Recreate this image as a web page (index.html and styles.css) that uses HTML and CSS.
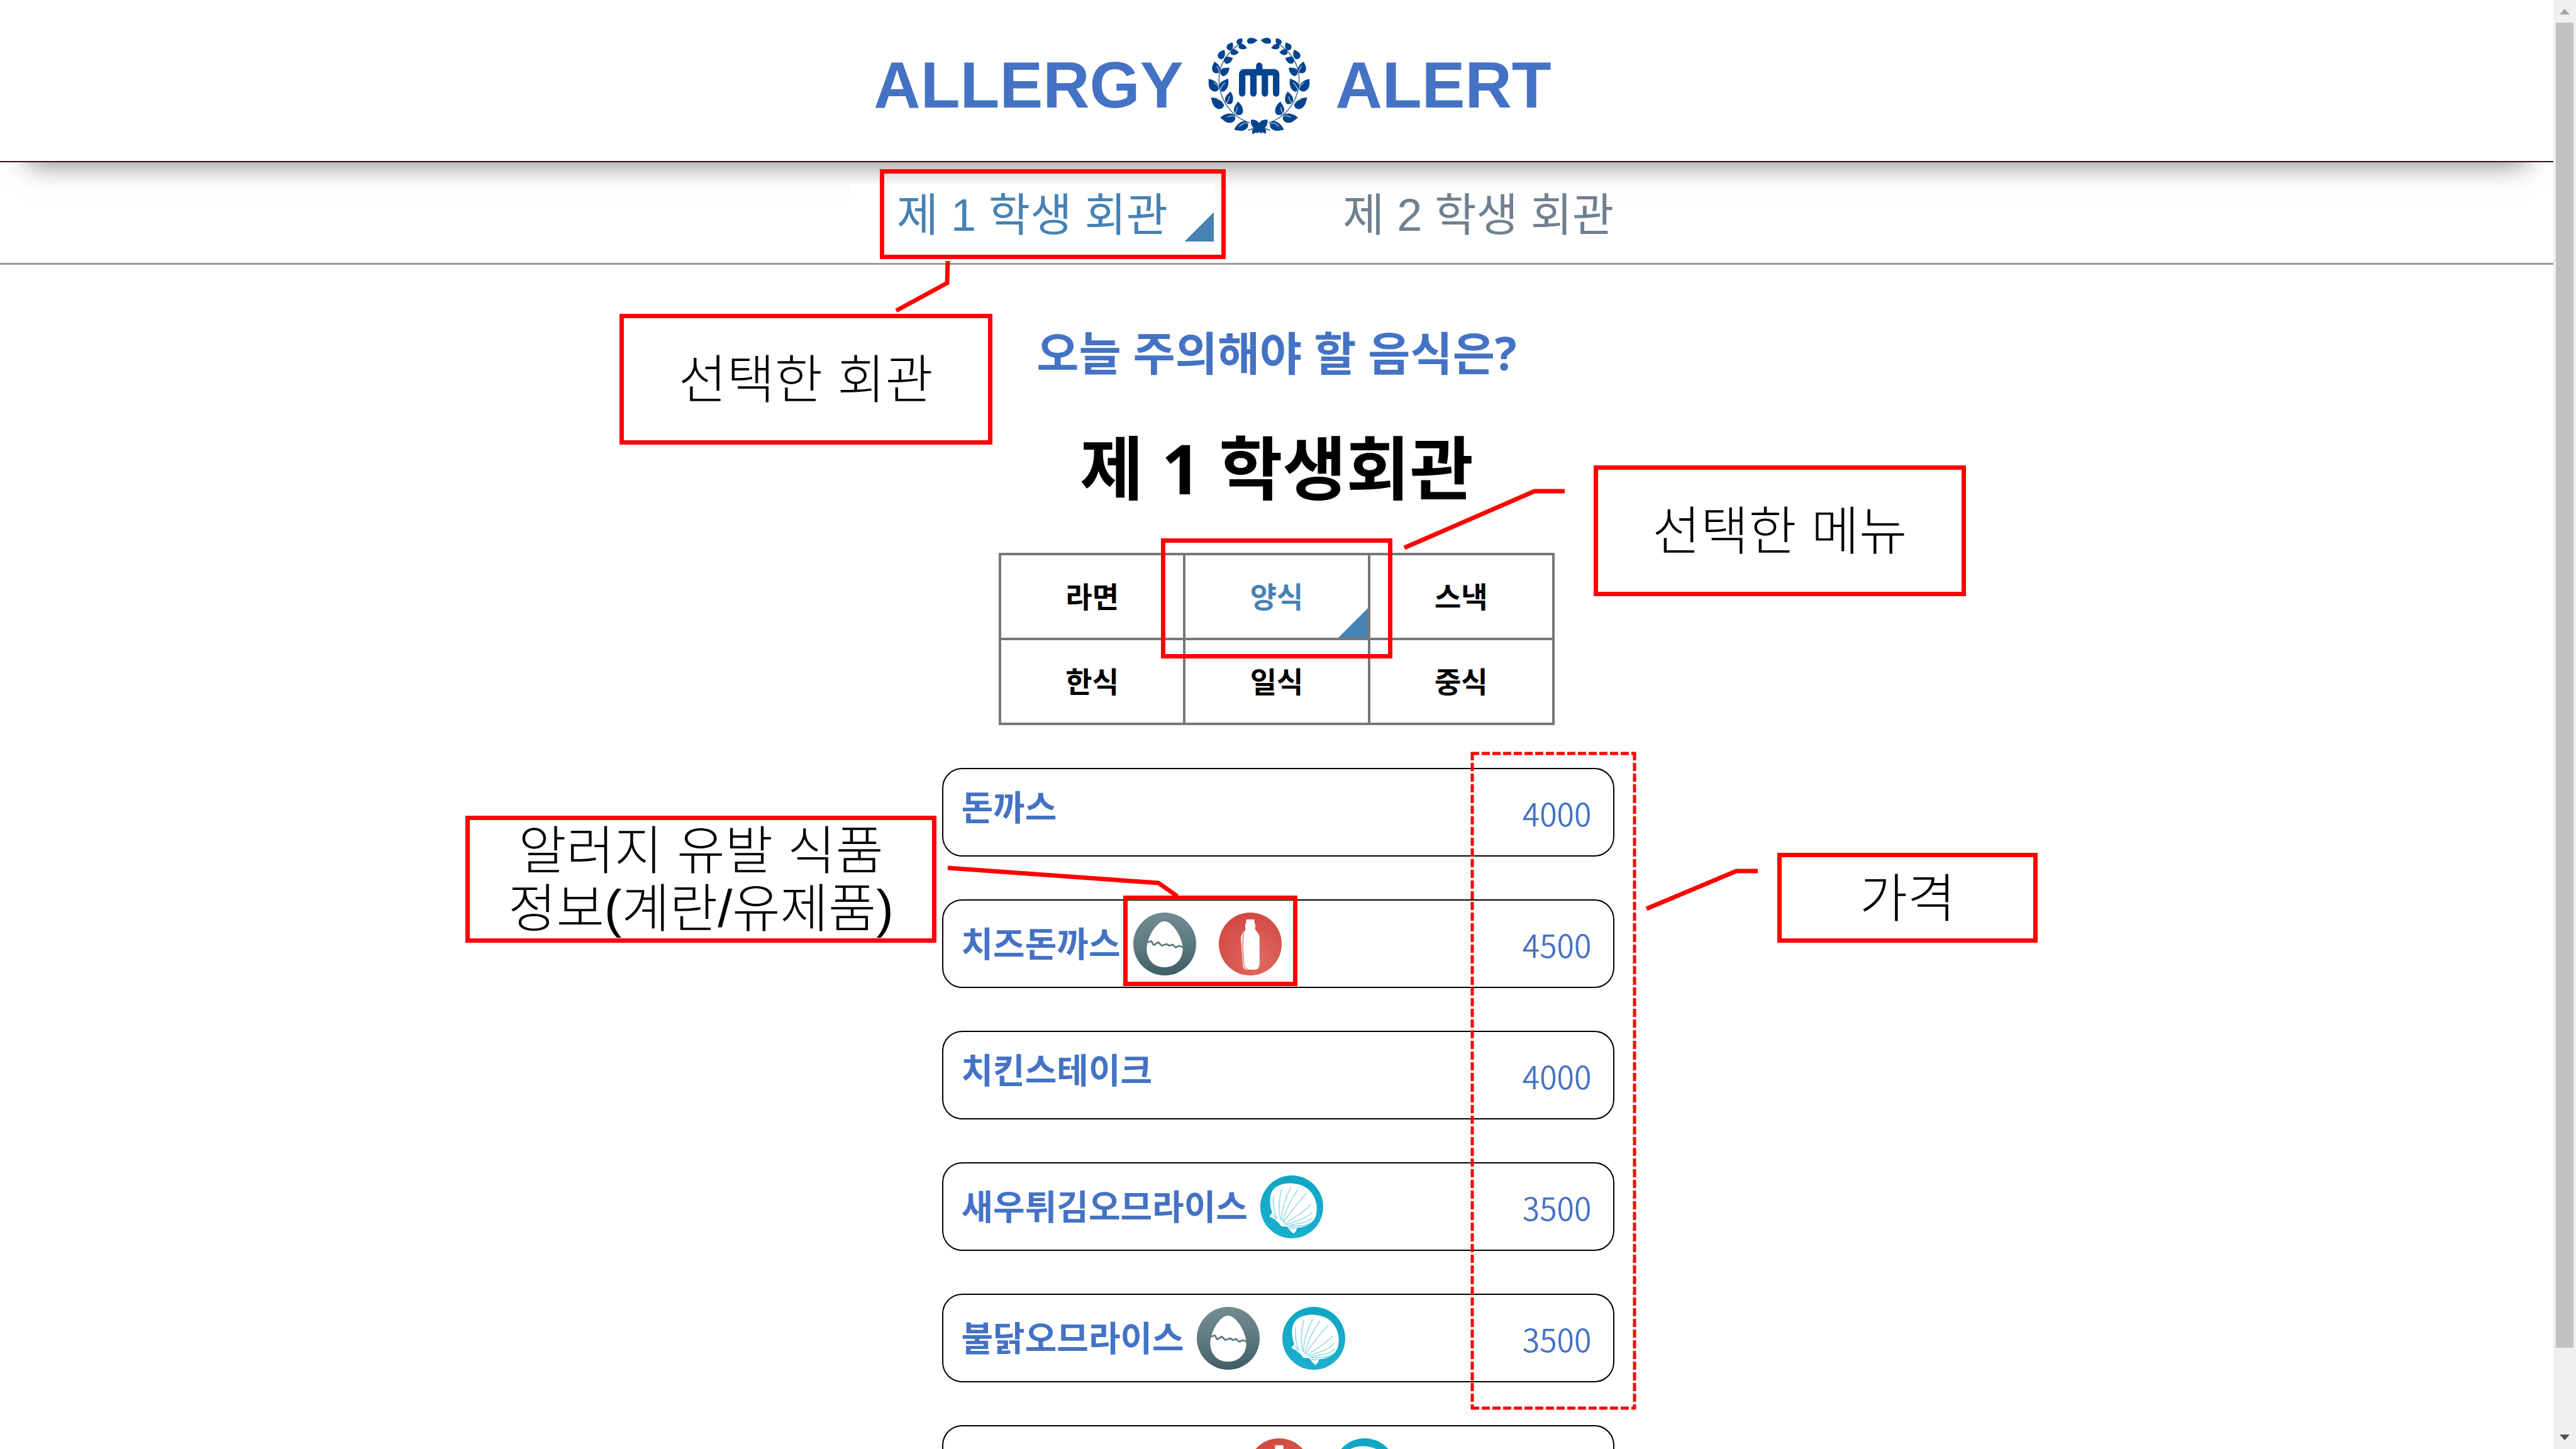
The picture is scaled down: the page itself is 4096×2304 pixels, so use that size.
FILE: index.html
```html
<!DOCTYPE html>
<html lang="ko">
<head>
<meta charset="utf-8">
<title>ALLERGY ALERT</title>
<link rel="stylesheet" href="styles.css">
</head>
<body>
<svg class="defs" aria-hidden="true">
  <defs>
    <linearGradient id="egg-fill" x1="0.4" y1="0" x2="0.5" y2="1">
      <stop offset="0" stop-color="#728b91"/>
      <stop offset="0.5" stop-color="#5f7a81"/>
      <stop offset="1" stop-color="#3e5e66"/>
    </linearGradient>
    <radialGradient id="milk-fill" cx="0.6" cy="0.75" r="0.75">
      <stop offset="0" stop-color="#de6a62"/>
      <stop offset="1" stop-color="#d24a42"/>
    </radialGradient>
    <linearGradient id="shell-fill" x1="0" y1="0" x2="0" y2="1">
      <stop offset="0" stop-color="#0fa6c5"/>
      <stop offset="1" stop-color="#1bb0cc"/>
    </linearGradient>
    <symbol id="egg" viewBox="0 0 108 108">
      <circle cx="54" cy="54" r="54" fill="url(#egg-fill)"/>
      <path fill="#fff" d="M53.500 15C67 15 84 41 85 62C85 81 72 94 53.500 94C35 94 23 81 23 62C24 41 40 15 53.500 15Z"/>
      <path fill="none" stroke="#5f7a81" stroke-width="3" stroke-linejoin="round" d="M24 51L31 49L35 56L43 51L49 57L57 54L62 57L67 55L73 60L79 57L86 60"/>
    </symbol>
    <symbol id="milk" viewBox="0 0 108 108">
      <circle cx="54" cy="54" r="54" fill="url(#milk-fill)"/>
      <path fill="#fff" d="M47 12H61V17L63 21L62 28C64 33 70 35 70 44V86C70 94 67 98 62 98H48C44 98 41 94 41 89L38 44C38 36 45 33 46 28L45 21L47 17Z"/>
      <path fill="none" stroke="#e58d87" stroke-width="2" d="M43 36C39 52 42 74 43 90Q44 95 49 97"/>
    </symbol>
    <symbol id="shell" viewBox="0 0 106 106">
      <circle cx="53" cy="53" r="53" fill="url(#shell-fill)"/>
      <path fill="#fff" d="M24 74L15 69L20 63C14 45 15 28 26 20C38 11 61 11 76 20C91 30 98 47 94 66C91 80 76 88 62 88L60 94L56 98L52 95L45 86H36L31 80Z"/>
      <path fill="none" stroke="#9bdbe8" stroke-width="1.800" stroke-linecap="round" d="M28 73C23 60 21 48 22 35M34 74C30 55 32 38 36 23M36 76C35 58 43 36 51 21M38 78C42 60 52 40 63 24M39 80C48 64 62 48 77 31M41 82C54 72 72 64 85 49M44 83C58 77 76 74 87 62M47 85C62 80 78 81 88 72M50 86C62 85 76 86 84 80M22 66L26 73M49 88Q54 91 59 88"/>
    </symbol>
    <path id="leaf" d="M0 0C28-38 72-48 94-26C108-4 98 40 62 40C36 40 20 16 0 0Z"/>
    <g id="wreath-half">
      <path fill="none" stroke="#4a7193" stroke-width="5" d="M262 104C215 135 165 185 155 265C147 350 180 410 215 450C245 484 275 500 312 512"/>
      <g fill="#04448f">
        <use href="#leaf" transform="translate(352 85) rotate(173) scale(.54 .4)"/>
        <use href="#leaf" transform="translate(272 76) rotate(124) scale(.38)"/>
        <use href="#leaf" transform="translate(298 126) rotate(194) scale(.44 .36)"/>
        <use href="#leaf" transform="translate(222 97) rotate(117) scale(.44 .42)"/>
        <use href="#leaf" transform="translate(256 148) rotate(180) scale(.42 .4)"/>
        <use href="#leaf" transform="translate(180 135) rotate(116) scale(.52 .46)"/>
        <use href="#leaf" transform="translate(225 178) rotate(158) scale(.48 .46)"/>
        <use href="#leaf" transform="translate(130 196) rotate(76) scale(.62 .54)"/>
        <use href="#leaf" transform="translate(207 227) rotate(140) scale(.56 .48)"/>
        <use href="#leaf" transform="translate(100 285) rotate(54) scale(.76 .6)"/>
        <use href="#leaf" transform="translate(200 283) rotate(120) scale(.74 .56)"/>
        <use href="#leaf" transform="translate(112 382) rotate(40) scale(.8 .6)"/>
        <use href="#leaf" transform="translate(212 350) rotate(98) scale(.66 .54)"/>
        <use href="#leaf" transform="translate(160 485) rotate(2) scale(.78 .62)"/>
        <use href="#leaf" transform="translate(250 402) rotate(84) scale(.7 .6)"/>
        <use href="#leaf" transform="translate(232 548) rotate(-25) scale(.78 .58)"/>
      </g>
      <g fill="none" stroke="#b9cbe0" stroke-width="4">
        <path d="M128 305Q150 315 153 335M185 305Q165 320 160 345M145 390Q170 395 178 415M208 375Q203 400 190 410M195 482Q225 470 235 480M248 430Q245 455 235 465M258 532Q275 510 300 512M140 220Q152 230 155 250"/>
      </g>
    </g>
  </defs>
</svg>

<div class="viewport">
  <main class="page">
    <header class="masthead">
      <h1 class="brand">
        <span>ALLERGY</span>
        <svg class="brand-logo" viewBox="98 70 524 502" role="img" aria-label="logo">
          <use href="#wreath-half"/>
          <use href="#wreath-half" transform="translate(720 0) scale(-1 1)"/>
          <path fill="#04448f" d="M318 496Q345 492 360 512Q375 492 404 496Q406 522 390 536Q402 552 392 568L376 560L370 566L360 558L350 566L344 560L328 570Q318 552 332 538Q314 522 318 496Z"/>
          <path fill="none" stroke="#4a7193" stroke-width="6" d="M332 540L304 550M388 540L416 550"/>
          <path fill="none" stroke="#04448f" stroke-width="33" stroke-linecap="round" stroke-linejoin="round" d="M273 360V262Q273 251 284 251H437Q448 251 448 262V360M331 252V360M390 252V360M361 218V250"/>
        </svg>
        <span>ALERT</span>
      </h1>
    </header>

    <nav class="halls">
      <a class="hall hall-active" href="#hall-1">제 1 학생 회관</a>
      <a class="hall" href="#hall-2">제 2 학생 회관</a>
    </nav>

    <section class="content">
      <p class="question">오늘 주의해야 할 음식은?</p>
      <h2 class="hall-title">제 1 학생회관</h2>

      <table class="kinds">
        <tr>
          <td><button class="kind" type="button">라면</button></td>
          <td><button class="kind kind-active" type="button">양식</button></td>
          <td><button class="kind" type="button">스낵</button></td>
        </tr>
        <tr>
          <td><button class="kind" type="button">한식</button></td>
          <td><button class="kind" type="button">일식</button></td>
          <td><button class="kind" type="button">중식</button></td>
        </tr>
      </table>

      <ul class="menu">
        <li class="dish dish-plain">
          <span class="dish-name">돈까스</span>
          <span class="price">4000</span>
        </li>
        <li class="dish">
          <span class="dish-name">치즈돈까스</span>
          <span class="allergens">
            <svg class="allergen"><use href="#egg"/></svg>
            <svg class="allergen"><use href="#milk"/></svg>
          </span>
          <span class="price">4500</span>
        </li>
        <li class="dish dish-plain">
          <span class="dish-name">치킨스테이크</span>
          <span class="price">4000</span>
        </li>
        <li class="dish">
          <span class="dish-name">새우튀김오므라이스</span>
          <span class="allergens">
            <svg class="allergen"><use href="#shell"/></svg>
          </span>
          <span class="price">3500</span>
        </li>
        <li class="dish">
          <span class="dish-name">불닭오므라이스</span>
          <span class="allergens">
            <svg class="allergen"><use href="#egg"/></svg>
            <svg class="allergen"><use href="#shell"/></svg>
          </span>
          <span class="price">3500</span>
        </li>
        <li class="dish">
          <span class="dish-name dish-name-blank"></span>
          <span class="allergens">
            <svg class="allergen"><use href="#milk"/></svg>
            <svg class="allergen"><use href="#shell"/></svg>
          </span>
        </li>
      </ul>
    </section>

    <div class="notes">
      <svg class="note-lines" viewBox="0 0 4060 2304" fill="none" stroke="#f00" stroke-width="7">
        <path d="M1507 415L1506 450L1425 494"/>
        <path d="M2233 871L2440 781H2488"/>
        <path d="M2618 1445L2761 1385H2795"/>
        <path d="M1507 1380L1842 1404L1872 1425"/>
        <path stroke-width="5" stroke-dasharray="13 4" d="M2339 1198H2601M2341 1196V2241M2599 1196V2241M2339 2239H2601"/>
      </svg>
      <div class="frame frame-hall"></div>
      <div class="frame frame-kind"></div>
      <div class="frame frame-allergens"></div>
      <div class="frame note note-hall">선택한 회관</div>
      <div class="frame note note-kind">선택한 메뉴</div>
      <div class="frame note note-allergens">알러지 유발 식품<br>정보(계란/유제품)</div>
      <div class="frame note note-price">가격</div>
    </div>
  </main>

  <div class="scrollbar" aria-hidden="true">
    <svg class="scroll-arrow" viewBox="0 0 16 9"><path fill="#a3a3a3" d="M8 0L16 9H0Z"/></svg>
    <div class="scroll-track"><div class="scroll-thumb"></div></div>
    <svg class="scroll-arrow" viewBox="0 0 16 9"><path fill="#505050" d="M0 0H16L8 9Z"/></svg>
  </div>
</div>
</body>
</html>
```
FILE: styles.css
```css
* {
  box-sizing: border-box;
}

body {
  margin: 0;
  background: #fff;
  color: #000;
  font-family: "Liberation Sans", "Noto Sans CJK KR", sans-serif;
}

.defs {
  position: absolute;
  width: 0;
  height: 0;
}

.viewport {
  display: flex;
  height: 100vh;
  overflow: hidden;
}

.page {
  position: relative;
  flex: 1;
  min-width: 0;
  overflow: hidden;
}

/* Header */
.masthead {
  display: flex;
  justify-content: center;
  align-items: center;
  height: 258px;
  padding-right: 204px;
  padding-top: 16px;
  border-bottom: 2px solid #2b1712;
  box-shadow: 0 43px 43px -43px #707070;
}

.brand {
  display: flex;
  align-items: center;
  gap: 40px;
  margin: 0;
  color: #4472c4;
  font-size: 103px;
  line-height: 120px;
}

.brand-logo {
  width: 162px;
  height: 155px;
}

/* Hall tabs */
.halls {
  display: flex;
  justify-content: center;
  gap: 132px;
  padding: 34px 68px 34px 0;
  border-bottom: 3px solid #9a9a9a;
}

.hall {
  padding: 8px 73px 0;
  color: #708090;
  font-size: 72px;
  font-weight: 400;
  line-height: 84px;
  text-decoration: none;
}

.hall-active {
  background: linear-gradient(135deg, transparent 50%, #4682b4 50%) right bottom / 47px 47px no-repeat #fff;
  color: #4682b4;
}

/* Content */
.content {
  display: flex;
  flex-direction: column;
  align-items: center;
  padding-top: 90px;
  font-family: "Open Sans", "Noto Sans CJK KR", sans-serif;
}

.question {
  margin: 0;
  color: #4472c4;
  font-size: 73px;
  font-weight: 700;
  line-height: 100px;
}

.hall-title {
  margin: 62px 0 0;
  font-size: 110px;
  line-height: 140px;
}

.kinds {
  width: 884px;
  margin-top: 66px;
  border-collapse: collapse;
  table-layout: fixed;
}

.kinds td {
  padding: 0;
  border: 4px solid #787878;
}

.kind {
  display: block;
  width: 100%;
  height: 131px;
  padding: 0 0 6px;
  border: 0;
  background: none;
  color: #000;
  font: 700 46px/60px "Noto Sans CJK KR", sans-serif;
}

.kind-active {
  background: linear-gradient(135deg, transparent 50%, #4682b4 50%) right bottom / 47px 47px no-repeat;
  color: #4682b4;
}

.menu {
  display: flex;
  flex-direction: column;
  gap: 68px;
  width: 1069px;
  margin: 68px 0 0 4px;
  padding: 0;
  list-style: none;
}

.dish {
  display: flex;
  align-items: center;
  height: 141px;
  padding: 0 34px 0 29px;
  border: 2px solid #000;
  border-radius: 32px;
  color: #4472c4;
}

.dish-name {
  padding-bottom: 8px;
  font: 700 55px/80px "Noto Sans CJK KR", sans-serif;
}

.dish-name-blank {
  width: 435px;
}

.dish-plain .dish-name {
  padding-bottom: 24px;
}

.allergens {
  display: flex;
  gap: 36px;
  margin-left: 20px;
}

.allergen {
  width: 100px;
  height: 100px;
}

.price {
  margin-left: auto;
  font: 350 50px/60px "Noto Sans CJK KR", sans-serif;
}

/* Explanatory notes drawn over the page */
.notes {
  position: absolute;
  top: 0;
  left: 50%;
  width: 4060px;
  height: 2304px;
  margin-left: -2030px;
  pointer-events: none;
}

.note-lines {
  position: absolute;
  inset: 0;
  width: 100%;
  height: 100%;
}

.frame {
  position: absolute;
  border: 7px solid #f00;
}

.frame-hall {
  left: 1399px;
  top: 269px;
  width: 550px;
  height: 143px;
}

.frame-kind {
  left: 1846px;
  top: 856px;
  width: 368px;
  height: 191px;
}

.frame-allergens {
  left: 1786px;
  top: 1424px;
  width: 277px;
  height: 144px;
}

.note {
  display: flex;
  justify-content: center;
  align-items: center;
  padding-top: 4px;
  background: #fff;
  font-size: 83px;
  font-weight: 300;
  line-height: 92px;
  text-align: center;
  white-space: nowrap;
}

.note-hall {
  left: 985px;
  top: 499px;
  width: 593px;
  height: 208px;
}

.note-kind {
  left: 2534px;
  top: 740px;
  width: 592px;
  height: 208px;
}

.note-allergens {
  left: 740px;
  top: 1297px;
  width: 749px;
  height: 202px;
}

.note-price {
  left: 2826px;
  top: 1356px;
  width: 414px;
  height: 143px;
}

/* Scrollbar */
.scrollbar {
  display: flex;
  flex-direction: column;
  align-items: center;
  width: 36px;
  padding: 14px 0;
  background: #f0f0f0;
}

.scroll-arrow {
  width: 16px;
  height: 9px;
}

.scroll-track {
  flex: 1;
  width: 28px;
  margin: 13px 0;
  padding-bottom: 125px;
}

.scroll-thumb {
  height: 100%;
  background: #c1c1c1;
}
```
